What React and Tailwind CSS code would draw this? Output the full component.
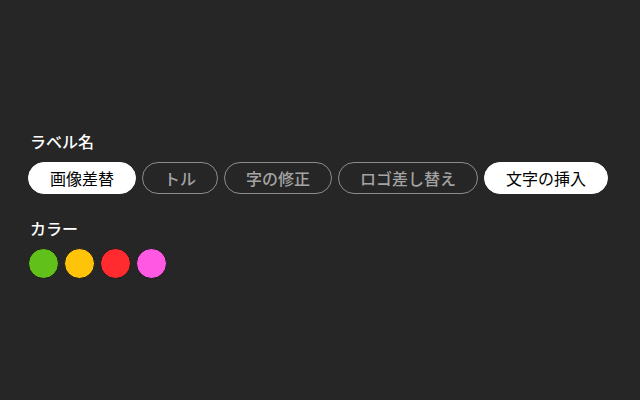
import React from 'react';

const labels = [
    { text: '画像差替', active: true },
    { text: 'トル', active: false },
    { text: '字の修正', active: false },
    { text: 'ロゴ差し替え', active: false },
    { text: '文字の挿入', active: true },
];

const colors = ['#62c01a', '#ffc40a', '#ff2b2f', '#ff58e2'];

const Pill = ({ text, active }) => (
    <button
        className={
            active
                ? 'h-[32px] px-[21px] rounded-full border border-white bg-white text-black text-[16px] leading-[30px]'
                : 'h-[32px] px-[21px] rounded-full border border-[#8c8c8c] bg-transparent text-[#a3a3a3] text-[16px] leading-[30px] font-medium'
        }
    >
        {text}
    </button>
);

const App = () => {
    return (
        <div
            className="w-[640px] h-[400px] bg-[#262626] text-white pt-[129px] pl-[28px]"
            style={{ fontFamily: '"Noto Sans CJK JP", "Noto Sans", sans-serif' }}
        >
            <div className="text-[16px] leading-[24px] font-medium pl-[2px]">ラベル名</div>
            <div className="flex gap-[6px] mt-[9px]">
                {labels.map((l) => (
                    <Pill key={l.text} text={l.text} active={l.active} />
                ))}
            </div>
            <div className="text-[16px] leading-[24px] font-medium pl-[2px] mt-[22px]">カラー</div>
            <div className="flex gap-[5px] mt-[8px]">
                {colors.map((c) => (
                    <div
                        key={c}
                        className="w-[31px] h-[31px] rounded-full border border-[#1a1a1a]"
                        style={{ backgroundColor: c }}
                    />
                ))}
            </div>
        </div>
    );
};

export default App;
